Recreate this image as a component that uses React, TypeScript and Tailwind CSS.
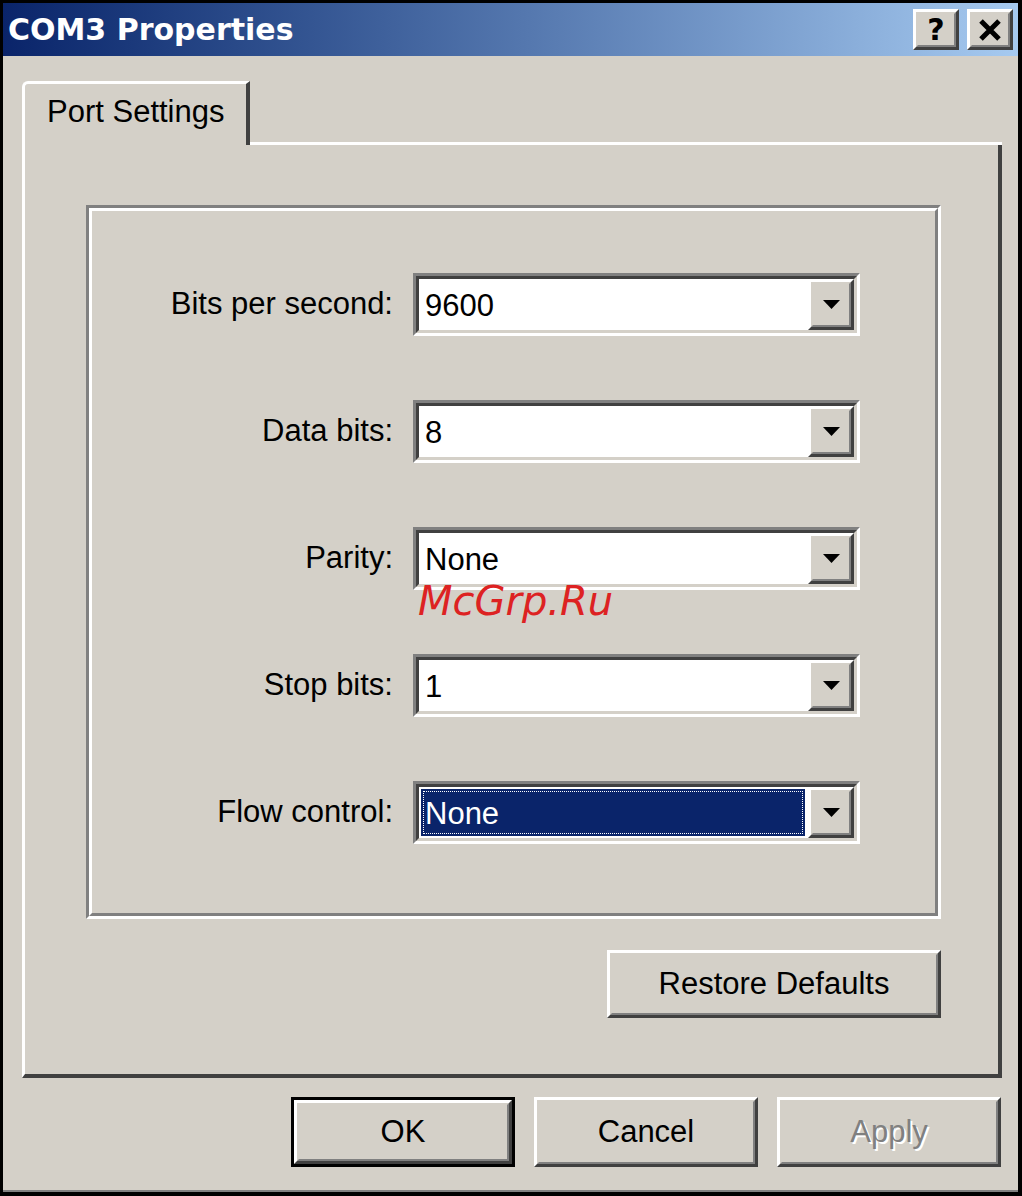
import React from "react";

const sans = "font-['Liberation_Sans',Arial,sans-serif]";

function Raised({ className = "", children }: { className?: string; children?: React.ReactNode }) {
  return (
    <div className={`border-[3px] border-t-white border-l-white border-r-[#404040] border-b-[#404040] ${className}`}>
      <div className="w-full h-full border-[2px] border-t-[#d4d0c8] border-l-[#d4d0c8] border-r-[#808080] border-b-[#808080] flex items-center justify-center">
        {children}
      </div>
    </div>
  );
}

function DropButton() {
  return (
    <Raised className="w-[46px] h-full bg-[#d4d0c8]">
      <svg width="17" height="9" viewBox="0 0 17 9">
        <polygon points="0,0 17,0 8.5,9" fill="#000" />
      </svg>
    </Raised>
  );
}

function Combo({ value, selected = false }: { value: string; selected?: boolean }) {
  return (
    <div className="w-[447px] h-[63px] border-[3px] border-t-[#808080] border-l-[#808080] border-b-white border-r-white">
      <div className="h-full flex bg-white border-[3px] border-t-[#404040] border-l-[#404040] border-b-[#d4d0c8] border-r-[#d4d0c8]">
        {selected ? (
          <div className="flex-1 p-[2px] pr-[3px]">
            <div className="h-full bg-[#0a246a] p-[2px]">
              <div className="h-full border border-dotted border-white text-white flex items-center pl-[1px] pt-[3px]">{value}</div>
            </div>
          </div>
        ) : (
          <div className="flex-1 flex items-center pl-[6px] pt-[3px] text-black">{value}</div>
        )}
        <DropButton />
      </div>
    </div>
  );
}

const rows: { label: string; value: string; selected?: boolean }[] = [
  { label: "Bits per second:", value: "9600" },
  { label: "Data bits:", value: "8" },
  { label: "Parity:", value: "None" },
  { label: "Stop bits:", value: "1" },
  { label: "Flow control:", value: "None", selected: true },
];

function PushButton({ label, isDefault = false, disabled = false }: { label: string; isDefault?: boolean; disabled?: boolean }) {
  const text = disabled ? (
    <span className="text-[#808080] [text-shadow:2px_2px_0_#fff]">{label}</span>
  ) : (
    <span className="text-black">{label}</span>
  );
  if (isDefault) {
    return (
      <div className="w-[224px] h-[70px] border-[3px] border-black">
        <Raised className="w-full h-full">{text}</Raised>
      </div>
    );
  }
  return <Raised className="w-[224px] h-[70px]">{text}</Raised>;
}

export default function App() {
  return (
    <div className={`relative w-[1022px] h-[1196px] bg-black pt-[3px] pl-[3px] pr-[4px] pb-[4px] ${sans} text-[31px]`}>
      <div className="h-full flex flex-col bg-[#d4d0c8] border-b-[2px] border-[#808080]">
        {/* title bar */}
        <div className="h-[53px] shrink-0 flex items-center justify-between pl-[5px] pr-[5px] bg-linear-to-r from-[#0a246a] to-[#a6caf0]">
          <span className="text-white font-bold text-[30px] font-['DejaVu_Sans',sans-serif] leading-none">COM3 Properties</span>
          <div className="flex gap-[8px]">
            <Raised className="w-[46px] h-[41px] bg-[#d4d0c8]">
              <span className="font-bold text-[30px] leading-none font-['DejaVu_Sans',sans-serif] text-black">?</span>
            </Raised>
            <Raised className="w-[46px] h-[41px] bg-[#d4d0c8]">
              <svg width="24" height="22" viewBox="0 0 24 22">
                <path d="M3 2 L21 20 M21 2 L3 20" stroke="#000" strokeWidth="5" />
              </svg>
            </Raised>
          </div>
        </div>

        <div className="flex-1 flex flex-col pt-[25px] pl-[19px] pr-[16px]">
          {/* tab header */}
          <div className="h-[64px] flex items-stretch">
            <div className="w-[228px] rounded-tl-[6px] border-t-[3px] border-l-[3px] border-t-white border-l-white border-r-[4px] border-r-[#404040] flex items-center pl-[22px] pb-[4px]">
              <span className="text-black">Port Settings</span>
            </div>
            <div className="flex-1 border-b-[3px] border-white" />
          </div>

          {/* tab page */}
          <div className="h-[933px] flex flex-col border-l-[3px] border-l-white border-r-[4px] border-r-[#404040] border-b-[4px] border-b-[#404040] pl-[61px] pr-[57px] pt-[60px]">
            <div className="w-[855px] h-[714px] border-[3px] border-t-[#808080] border-l-[#808080] border-b-white border-r-white">
              <div className="h-full border-[3px] border-t-white border-l-white border-b-[#808080] border-r-[#808080] flex flex-col gap-[64px] pt-[62px]">
                {rows.map((r) => (
                  <div key={r.label} className="flex items-center gap-[20px]">
                    <div className="w-[301px] text-right text-black">{r.label}</div>
                    <Combo value={r.value} selected={r.selected} />
                  </div>
                ))}
              </div>
            </div>
            <div className="flex justify-end mt-[31px]">
              <Raised className="w-[334px] h-[68px]">
                <span className="text-black">Restore Defaults</span>
              </Raised>
            </div>
          </div>

          {/* dialog buttons */}
          <div className="flex justify-end gap-[19px] mt-[19px] pr-[1px]">
            <PushButton label="OK" isDefault />
            <PushButton label="Cancel" />
            <PushButton label="Apply" disabled />
          </div>
        </div>
      </div>

      <span className="absolute left-[418px] top-[581px] text-[40px] leading-none italic text-[#dd2222] font-['DejaVu_Sans',sans-serif]">McGrp.Ru</span>
    </div>
  );
}
